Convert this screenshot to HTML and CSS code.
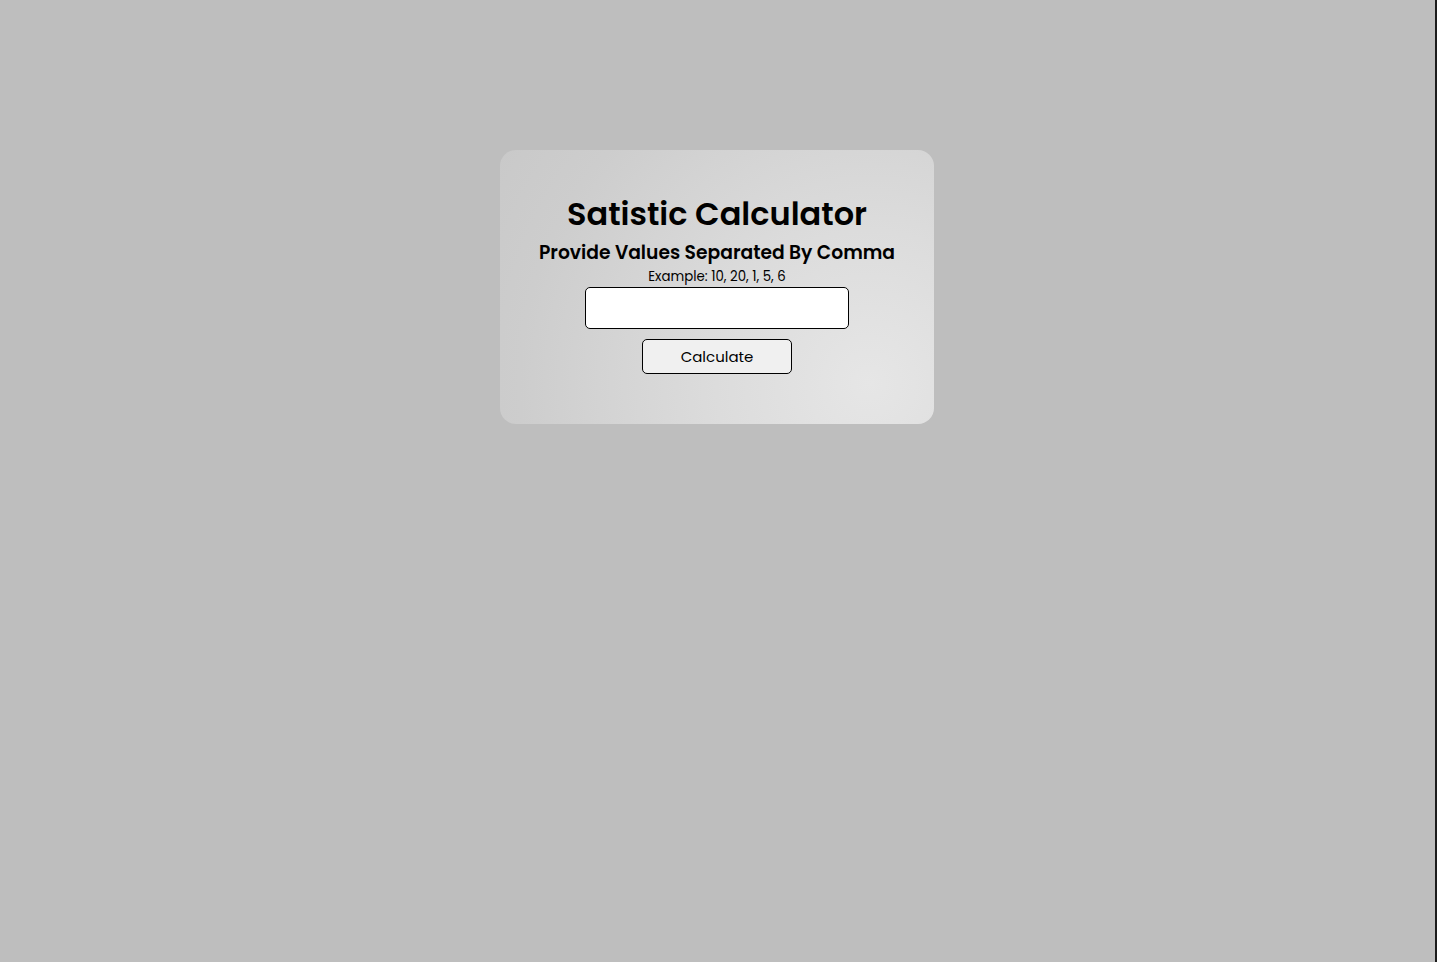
FILE: index.html
```html
<!DOCTYPE html>
<html lang="en">
<head>
  <meta charset="UTF-8">
  <meta name="viewport" content="width=device-width, initial-scale=1.0">
  <title>Satistic Calculator</title>
  <link rel="stylesheet" href="styles.css">
</head>
<body>
  <div class="page">
    <!-- Calculator card -->
    <div class="card">
      <h1>Satistic Calculator</h1>
      <h3>Provide Values Separated By Comma</h3>
      <p class="hint">Example: 10, 20, 1, 5, 6</p>
      <input type="text" id="values" class="values-input">
      <button type="button" class="calc-btn">Calculate</button>
    </div>
  </div>
</body>
</html>
```

FILE: styles.css
```css
html {
  background-color: #bebebe;
  border-right: 2px solid #1c1c1c;
  min-height: 100%;
}

body {
  margin: 0;
  padding: 0;
  font-family: 'Poppins', 'Open Sans', sans-serif;
  color: #000;
}

.page {
  display: flex;
  justify-content: center;
  padding: 150px 1px 0 0;
}

.card {
  width: 434px;
  box-sizing: border-box;
  padding: 40px 20px 50px;
  border-radius: 16px;
  background: radial-gradient(circle at 85% 85%, #e6e6e6 0%, #dcdcdc 35%, #cdcdcd 80%, #c9c9c9 100%);
  display: flex;
  flex-direction: column;
  align-items: center;
  text-align: center;
}

.card h1 {
  margin: 0;
  font-size: 32px;
  line-height: 48px;
  font-weight: 600;
}

.card h3 {
  margin: 1px 0 0;
  font-size: 18.72px;
  line-height: 28px;
  font-weight: 600;
}

.hint {
  margin: 0;
  font-size: 13.33px;
  line-height: 20px;
}

.values-input {
  margin-top: 0;
  width: 264px;
  height: 42px;
  box-sizing: border-box;
  border: 1px solid #000;
  border-radius: 5px;
  background: #fff;
}

.calc-btn {
  margin-top: 10px;
  width: 150px;
  height: 35px;
  box-sizing: border-box;
  border: 1px solid #000;
  border-radius: 5px;
  background-color: #f0f0f0;
  font-family: inherit;
  font-size: 15px;
  color: #000;
}
```
